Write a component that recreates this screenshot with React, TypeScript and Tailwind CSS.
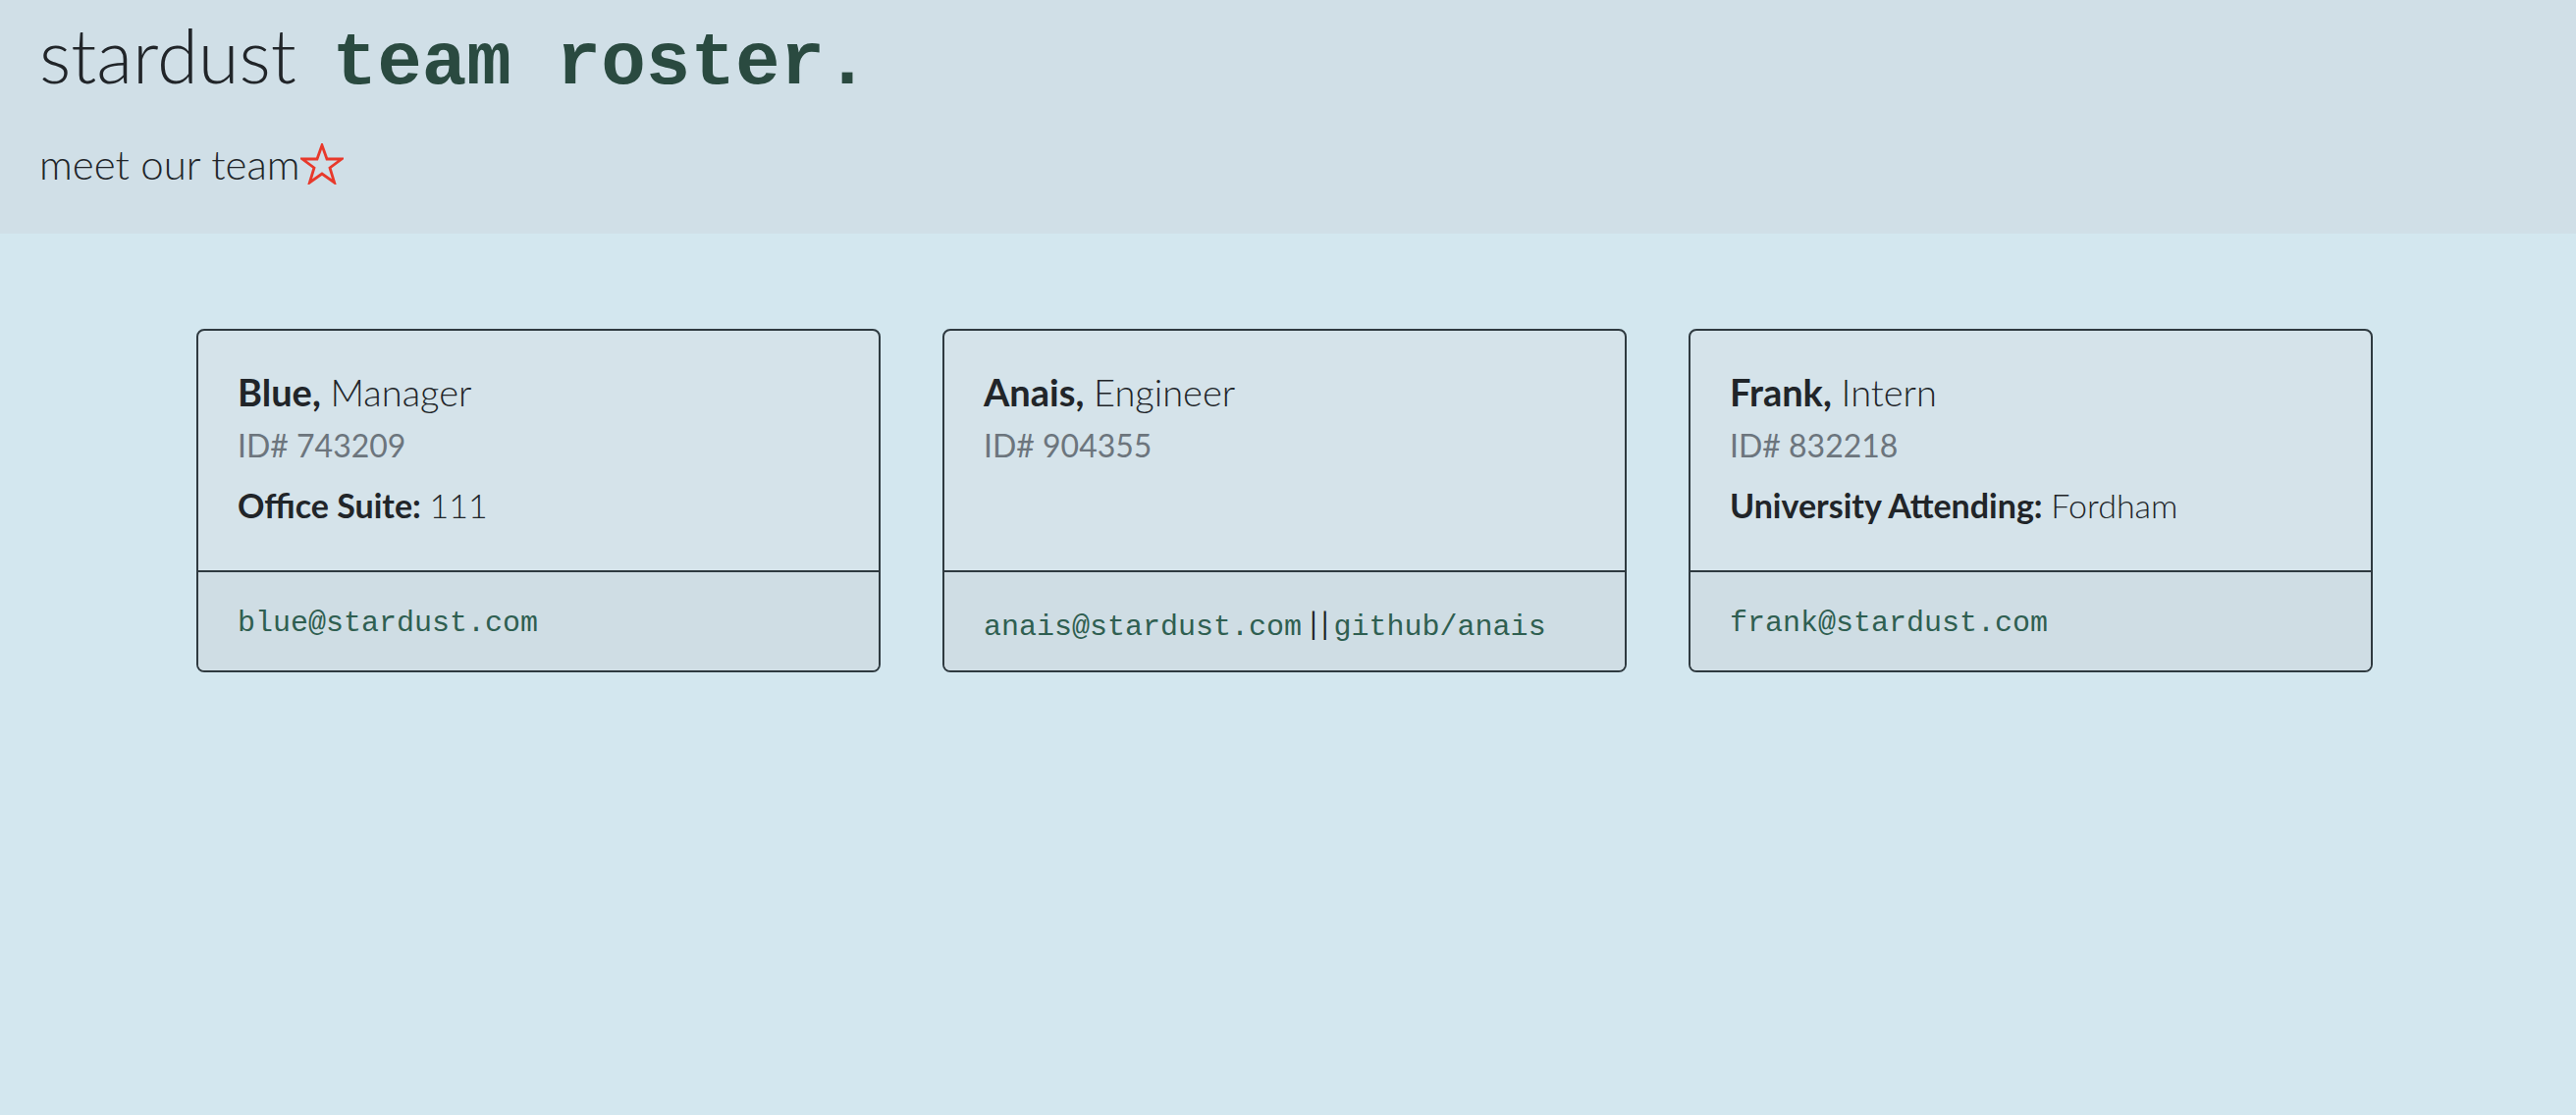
import React from "react";

type Member = {
  name: string;
  role: string;
  id: string;
  extraLabel?: string;
  extraValue?: string;
  email: string;
  github?: string;
};

const team: Member[] = [
  { name: "Blue", role: "Manager", id: "743209", extraLabel: "Office Suite:", extraValue: "111", email: "blue@stardust.com" },
  { name: "Anais", role: "Engineer", id: "904355", email: "anais@stardust.com", github: "github/anais" },
  { name: "Frank", role: "Intern", id: "832218", extraLabel: "University Attending:", extraValue: "Fordham", email: "frank@stardust.com" },
];

const lato = "font-['Lato','Noto_Sans',sans-serif]";
const mono = "font-['Liberation_Mono','Courier_New',monospace]";

function Star() {
  return (
    <svg viewBox="0 0 44 42" className="inline-block w-[44px] h-[42px] align-[-5px]" fill="none">
      <path
        d="M22 2 L27 16 L42 16 L30 25 L34.6 40 L22 31 L9.4 40 L14 25 L2 16 L17 16 Z"
        stroke="#e8392b"
        strokeWidth="2.8"
        strokeLinejoin="miter"
      />
    </svg>
  );
}

function MemberCard({ m }: { m: Member }) {
  return (
    <div className="flex flex-col border-2 border-[#2f3a40] rounded-[8px] overflow-hidden bg-[#d5e3ea]">
      <div className="flex-1 px-[40px] pt-[38px] pb-[42px]">
        <h5 className="text-[38px] leading-[48px] text-[#212529]">
          <span className="font-bold">{m.name},</span> <span className="font-light">{m.role}</span>
        </h5>
        <h6 className="mt-[12px] text-[32px] leading-[38px] text-[#6c757d]">ID# {m.id}</h6>
        {m.extraLabel && (
          <p className="mt-[18px] text-[34px] leading-[48px] text-[#212529]">
            <span className="font-bold">{m.extraLabel}</span> <span className="font-light">{m.extraValue}</span>
          </p>
        )}
      </div>
      <div className="border-t-2 border-[#2f3a40] bg-[#cfdde4] px-[40px] pt-[28px] pb-[22px] h-[102px]">
        <div className="flex items-baseline leading-[48px]">
          <span className={`${mono} text-[30px] text-[#2f5f51]`}>{m.email}</span>
          {m.github && (
            <>
              <span className="text-[31px] text-[#1b1f23] ml-[8px] mr-[1px] tracking-[4px]">||</span>
              <span className={`${mono} text-[30px] text-[#2f5f51]`}>{m.github}</span>
            </>
          )}
        </div>
      </div>
    </div>
  );
}

export default function App() {
  return (
    <div className={`${lato} min-h-[1136px] w-full bg-[#d3e7ef]`}>
      {/* Header */}
      <header className="h-[238px] bg-[#d0dfe7] px-[40px] pt-[10px]">
        <h1 className="text-[76px] leading-[92px] text-[#212529] font-light">
          stardust <span className={`${mono} ml-[16px] font-bold text-[#2a4a40]`}>team roster.</span>
        </h1>
        <p className="mt-[31px] text-[42px] leading-[50px] font-light text-[#212529]">
          meet our team<Star />
        </p>
      </header>

      {/* Cards */}
      <main className="pt-[97px] pl-[200px]">
        <div className="grid grid-cols-[697px_697px_697px] gap-[63px]">
          {team.map((m) => (
            <MemberCard key={m.id} m={m} />
          ))}
        </div>
      </main>
    </div>
  );
}
